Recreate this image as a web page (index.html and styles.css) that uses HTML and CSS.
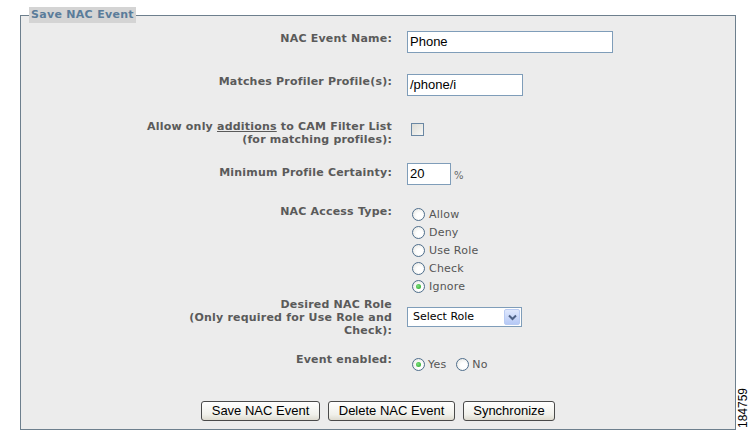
FILE: index.html
```html
<!DOCTYPE html>
<html>
<head>
<meta charset="utf-8">
<link rel="stylesheet" href="styles.css">
</head>
<body>
<fieldset class="panel">
  <legend class="panel-title">Save NAC Event</legend>
  <div class="form">
    <div class="row r1">
      <div class="lbl">NAC Event Name:</div>
      <div class="field"><div class="text-input w-name">Phone</div></div>
    </div>
    <div class="row r2">
      <div class="lbl">Matches Profiler Profile(s):</div>
      <div class="field"><div class="text-input w-prof">/phone/i</div></div>
    </div>
    <div class="row r3">
      <div class="lbl">Allow only <u>additions</u> to CAM Filter List<br>(for matching profiles):</div>
      <div class="field"><span class="checkbox"></span></div>
    </div>
    <div class="row r4">
      <div class="lbl">Minimum Profile Certainty:</div>
      <div class="field inline"><div class="text-input w-cert">20</div><span class="pct">%</span></div>
    </div>
    <div class="row r5">
      <div class="lbl">NAC Access Type:</div>
      <div class="field radios">
        <label class="opt"><span class="radio"></span>Allow</label>
        <label class="opt"><span class="radio"></span>Deny</label>
        <label class="opt"><span class="radio"></span>Use Role</label>
        <label class="opt"><span class="radio"></span>Check</label>
        <label class="opt"><span class="radio on"></span>Ignore</label>
      </div>
    </div>
    <div class="row r6">
      <div class="lbl">Desired NAC Role<br>(Only required for Use Role and Check):</div>
      <div class="field">
        <div class="select">
          <span class="select-text">Select Role</span>
          <span class="select-btn">
            <svg width="9" height="7" viewBox="0 0 9 7"><path d="M1 1.5 L4.5 5 L8 1.5" fill="none" stroke="#4d6185" stroke-width="2"/></svg>
          </span>
        </div>
      </div>
    </div>
    <div class="row r7">
      <div class="lbl">Event enabled:</div>
      <div class="field yesno">
        <label class="opt"><span class="radio on"></span>Yes</label>
        <label class="opt"><span class="radio"></span>No</label>
      </div>
    </div>
    <div class="buttons">
      <button class="btn b-save">Save NAC Event</button>
      <button class="btn b-del">Delete NAC Event</button>
      <button class="btn b-sync">Synchronize</button>
    </div>
  </div>
</fieldset>
<div class="figno">184759</div>
</body>
</html>
```
FILE: styles.css
```css
html, body {
  margin: 0;
  padding: 0;
  background: #ffffff;
}
body {
  position: relative;
  width: 755px;
  height: 432px;
  overflow: hidden;
  font-family: "DejaVu Sans", Verdana, sans-serif;
}
.panel {
  box-sizing: border-box;
  width: 716px;
  margin: 7px 0 0 20px;
  padding: 0 0 8px 8px;
  border: 1px solid #6d7f8d;
  background: #ececec;
}
.panel-title {
  padding: 0 2px;
  background: #d4d4d4;
  color: #5a7c9a;
  font: bold 11px/16px "DejaVu Sans", Verdana, sans-serif;
  letter-spacing: 0.3px;
}
.form {
  margin-left: 118px;
  padding-top: 8px;
}
.row {
  display: grid;
  grid-template-columns: 245px 1fr;
  column-gap: 15px;
  align-items: start;
}
.r1 { height: 43px; }
.r2 { height: 46px; }
.r3 { height: 43px; }
.r4 { height: 42px; }
.r5 { height: 93px; }
.r6 { height: 55px; }
.r7 { height: 48px; }
.lbl {
  text-align: right;
  font: bold 11px/13px "DejaVu Sans", Verdana, sans-serif;
  letter-spacing: 0.2px;
  color: #5a5a5a;
}
.r1 .lbl, .r2 .lbl { margin-top: 1px; }
.r4 .lbl { margin-top: 3px; }
.text-input {
  box-sizing: border-box;
  height: 22px;
  border: 1px solid #7f9db9;
  background: #ffffff;
  padding: 0 2px;
  font: 13px/20px "Liberation Sans", Arial, sans-serif;
  color: #000;
}
.w-name { width: 206px; }
.w-prof { width: 116px; }
.w-cert { width: 44px; }
.inline {
  display: flex;
  align-items: flex-end;
}
.pct {
  font: 10px/14px "DejaVu Sans", Verdana, sans-serif;
  color: #666;
  margin-left: 3px;
  margin-bottom: 2px;
}
.checkbox {
  display: block;
  box-sizing: border-box;
  width: 13px;
  height: 13px;
  margin: 3px 0 0 4px;
  border: 1px solid #6a87a3;
  background: linear-gradient(135deg, #dcdcd6, #f7f7f5);
}
.radios {
  display: flex;
  flex-direction: column;
}
.opt {
  display: flex;
  align-items: center;
  height: 18px;
  font: 11px/13px "DejaVu Sans", Verdana, sans-serif;
  letter-spacing: 0.2px;
  color: #555;
}
.radio {
  box-sizing: border-box;
  width: 13px;
  height: 13px;
  margin: 0 4px 0 5px;
  border: 1px solid #4f6e8c;
  border-radius: 50%;
  background: radial-gradient(circle at 60% 60%, #ffffff 30%, #e2e2dc 100%);
  display: flex;
  align-items: center;
  justify-content: center;
}
.radio.on::after {
  content: "";
  width: 5px;
  height: 5px;
  border-radius: 50%;
  background: radial-gradient(circle at 40% 40%, #7fe07f, #21a121);
}
.r6 .field { padding-top: 9px; }
.select {
  box-sizing: border-box;
  width: 115px;
  height: 20px;
  border: 1px solid #7f9db9;
  background: #fff;
  display: flex;
  align-items: center;
  justify-content: space-between;
  padding: 0 1px 0 5px;
}
.select-text {
  font: 11px/14px "DejaVu Sans", Verdana, sans-serif;
  color: #000;
}
.select-btn {
  box-sizing: border-box;
  width: 16px;
  height: 16px;
  border: 1px solid #b9cbf3;
  border-radius: 2px;
  background: linear-gradient(#dfe8fd, #b6c9f6);
  display: flex;
  align-items: center;
  justify-content: center;
}
.yesno {
  display: flex;
  padding-top: 2px;
}
.yesno .opt + .opt { margin-left: 5px; }
.yesno .opt .radio { margin-left: 5px; margin-right: 3px; }
.buttons {
  display: flex;
  justify-content: center;
  gap: 7px;
  margin-left: -118px;
  padding-right: 8px;
}
.btn {
  box-sizing: border-box;
  height: 20px;
  padding: 0 9px;
  border: 1px solid #4a4a4a;
  border-radius: 3px;
  background: linear-gradient(#ffffff, #f0f0ea 70%, #dedbd0);
  font: 13px/18px "Liberation Sans", Arial, sans-serif;
  color: #000;
}
.b-save { width: 119px; }
.b-del { width: 127px; margin-left: 1px; }
.b-sync { width: 92px; margin-left: 1px; }
.figno {
  position: absolute;
  left: 737px;
  top: 388px;
  writing-mode: vertical-rl;
  transform: rotate(180deg);
  font: 12px/13px "Liberation Sans", Arial, sans-serif;
  color: #000;
}
```
